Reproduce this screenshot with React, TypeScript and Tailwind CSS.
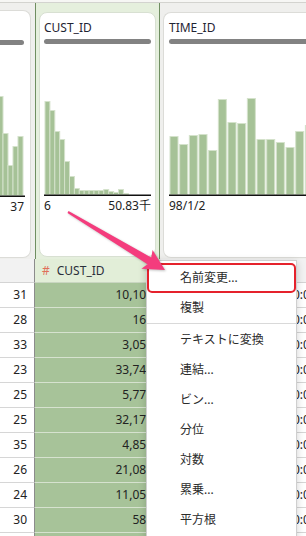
import React from "react";

const leftVals = ["31", "28", "33", "23", "25", "25", "35", "26", "24", "30", ""];
const custVals = ["10,100", "164", "3,050", "33,744", "5,777", "32,177", "4,857", "21,084", "11,057", "584", ""];

const leftBars = [99, 62, 30, 49, 59];
const custBars = [93, 84, 63, 55, 33, 18, 6, 4, 4, 4, 4, 4, 5, 3, 2, 5, 1];
const timeBars = [58, 50, 59, 60, 44, 95, 72, 71, 96, 55, 55, 52, 47, 63, 69, 60];

const menuItems = ["名前変更...", "複製", "-", "テキストに変換", "連結...", "ビン...", "分位", "対数", "累乗...", "平方根"];

function Hist({
  bars,
  width,
  pitch,
  barW,
  x0,
}: {
  bars: number[];
  width: number;
  pitch: number;
  barW: number;
  x0: number;
}) {
  const height = 152;
  return (
    <svg width={width} height={height} className="block">
      {bars.map((h, i) => (
        <rect
          key={i}
          x={x0 + i * pitch}
          y={150.5 - h}
          width={barW}
          height={h}
          fill="#a6c297"
          stroke="#d4e2cb"
          strokeWidth={1}
        />
      ))}
      <line x1={0} x2={width} y1={151.25} y2={151.25} stroke="#111" strokeWidth={1.5} />
    </svg>
  );
}

export default function App() {
  return (
    <div className="relative w-[306px] h-[536px] overflow-hidden bg-white text-[#222] font-['Noto_Sans','Noto_Sans_CJK_JP',sans-serif]">
      <div className="h-[3px] bg-[#f6f6f4] border-b border-[#d3d3cf]" />
      <div className="flex">
        {/* partial column on the left */}
        <div className="w-[35px] shrink-0 flex flex-col">
          <div className="h-[256px] bg-[#efefed] pt-[7px] pb-[1px] pr-[4px]">
            <div className="h-full bg-white rounded-r-lg border border-l-0 border-[#dcdcd8] pt-[10px] pr-[6px]">
              <div className="h-[16px]" />
              <div className="mt-[3px] h-[5px] rounded-r-full bg-[#828282]" />
              <Hist bars={leftBars} width={25} pitch={5} barW={5} x0={-2} />
              <div className="mt-[3px] text-[12px] leading-[14px] text-right">37</div>
            </div>
          </div>
          <div className="h-[24px] bg-[#f2f2f2] border-b border-r border-[#d4d4d4] border-r-[#8c8c8c]" />
          {leftVals.map((v, i) => (
            <div
              key={i}
              className="h-[25px] shrink-0 border-b border-r border-[#d6d6d6] border-r-[#8c8c8c] pr-[7px] text-right text-[12px] leading-[24px]"
            >
              {v}
            </div>
          ))}
        </div>

        {/* selected CUST_ID column */}
        <div className="w-[125px] shrink-0 flex flex-col">
          <div className="h-[256px] bg-[#e5efdd] border-x border-[#6f8e61] pt-[9px] pb-[2px] px-[3px]">
            <div className="h-full bg-white rounded-lg border border-[#d8e0d2] pt-[7px] pl-[4px] pr-[4px]">
              <div className="text-[12px] leading-[16px] text-[#1f2433]">CUST_ID</div>
              <div className="mt-[3px] h-[5px] rounded-full bg-[#828282]" />
              <Hist bars={custBars} width={107} pitch={4.9} barW={4.9} x0={1} />
              <div className="mt-[3px] flex justify-between text-[12px] leading-[14px]">
                <span>6</span>
                <span>50.83千</span>
              </div>
            </div>
          </div>
          <div className="h-[24px] bg-[#e2eed8] border-b border-[#c9d6c1] pl-[7px] flex items-center text-[12px]">
            <span className="text-[#e0705a] mr-[7px]">#</span>
            <span className="text-[#2a2f3a]">CUST_ID</span>
          </div>
          {custVals.map((v, i) => (
            <div
              key={i}
              className="h-[25px] shrink-0 bg-[#a7c399] border-b border-[#d6e2cf] pr-[7px] text-right text-[12px] leading-[24px]"
            >
              {v}
            </div>
          ))}
        </div>

        {/* TIME_ID column */}
        <div className="w-[170px] shrink-0 flex flex-col">
          <div className="h-[256px] bg-[#efefed] pt-[9px] pb-[1px] pl-[3px]">
            <div className="h-full bg-white rounded-l-lg border border-r-0 border-[#dcdcd8] pt-[7px] pl-[5px]">
              <div className="text-[12px] leading-[16px] text-[#1f2433]">TIME_ID</div>
              <div className="mt-[3px] h-[5px] rounded-l-full bg-[#828282]" />
              <Hist bars={timeBars} width={160} pitch={9.67} barW={8} x0={1} />
              <div className="mt-[3px] text-[12px] leading-[14px]">98/1/2</div>
            </div>
          </div>
          <div className="h-[24px] bg-[#f2f2f2] border-b border-[#d4d4d4]" />
          {custVals.map((_, i) => (
            <div
              key={i}
              className="h-[25px] shrink-0 border-b border-[#d6d6d6] pl-[133px] text-[12px] leading-[24px] whitespace-nowrap"
            >
              0:00:00
            </div>
          ))}
        </div>
      </div>

      {/* context menu */}
      <div className="absolute left-[146px] top-[260px] w-[151px] h-[300px] z-10 bg-white border border-[#cfcfcf] shadow-[0_2px_8px_rgba(0,0,0,0.18)] pt-[2px] text-[12px] text-[#2b2b2b]">
        {menuItems.map((m, i) =>
          m === "-" ? (
            <div key={i} className="h-[2px] border-t border-[#d9d9d9]" />
          ) : i === 0 ? (
            <div
              key={i}
              className="h-[30px] border-2 border-[#e5222c] rounded-[5px] pl-[31px] flex items-center"
            >
              {m}
            </div>
          ) : (
            <div key={i} className="h-[30px] pl-[33px] flex items-center">
              {m}
            </div>
          )
        )}
      </div>

      {/* callout arrow */}
      <svg
        className="absolute left-0 top-0 z-20 pointer-events-none"
        width={306}
        height={536}
      >
        <polygon
          points="68.5,211.1 151.2,257.6 152.6,249.9 165,270 141.4,268.7 147.5,264.2 67.5,212.9"
          fill="#f43c7d"
          style={{ filter: "drop-shadow(1px 1px 1px rgba(0,0,0,0.25))" }}
        />
      </svg>
    </div>
  );
}
